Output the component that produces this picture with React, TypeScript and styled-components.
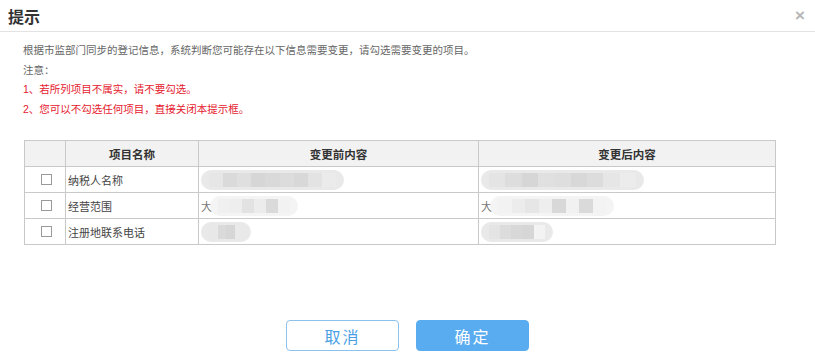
import styled, { createGlobalStyle } from "styled-components";

const GlobalStyle = createGlobalStyle`
  html, body {
    margin: 0;
    padding: 0;
    background: #fff;
  }
  body {
    font-family: "Liberation Sans", "Noto Sans CJK SC", sans-serif;
  }
`;

type Blob = { lead?: boolean; width: number; blocks: string[] };

const rows: { name: string; before: Blob; after: Blob }[] = [
  {
    name: "纳税人名称",
    before: { width: 143, blocks: ["#e6e6e6", "#dadada", "#dfdfdf", "#d6d6d6", "#d9d9d9", "#dcdcdc", "#d8d8d8", "#e3e3e3", "#ebebeb"] },
    after: { width: 163, blocks: ["#e4e4e4", "#dddddd", "#d6d6d6", "#e0e0e0", "#dedede", "#d8d8d8", "#dcdcdc", "#e6e6e6", "#ececec"] },
  },
  {
    name: "经营范围",
    before: { lead: true, width: 88, blocks: ["#f0f0f0", "#eeeeee", "#e2e2e2", "#ececec", "#dadada", "#f2f2f2"] },
    after: { lead: true, width: 124, blocks: ["#f2f2f2", "#ececec", "#e6e6e6", "#eeeeee", "#d8d8d8", "#f1f1f1", "#dadada", "#f3f3f3"] },
  },
  {
    name: "注册地联系电话",
    before: { width: 50, blocks: ["#e8e8e8", "#dadada", "#d6d6d6", "#e9e9e9"] },
    after: { width: 72, blocks: ["#e4e4e4", "#dcdcdc", "#d8d8d8", "#d6d6d6", "#f3f3f3"] },
  },
];

export default function App() {
  return (
    <>
      <GlobalStyle />
      <Dialog>
        <Header>
          <Title>提示</Title>
          <Close>×</Close>
        </Header>
        <Notes>
          <Line>根据市监部门同步的登记信息，系统判断您可能存在以下信息需要变更，请勾选需要变更的项目。</Line>
          <Line>注意：</Line>
          <Line warn>1、若所列项目不属实，请不要勾选。</Line>
          <Line warn>2、您可以不勾选任何项目，直接关闭本提示框。</Line>
        </Notes>
        <Table>
          <colgroup>
            <col style={{ width: 41 }} />
            <col style={{ width: 133 }} />
            <col style={{ width: 280 }} />
            <col />
          </colgroup>
          <thead>
            <tr>
              <Th />
              <Th>项目名称</Th>
              <Th>变更前内容</Th>
              <Th>变更后内容</Th>
            </tr>
          </thead>
          <tbody>
            {rows.map((r) => (
              <tr key={r.name}>
                <Td center>
                  <Check />
                </Td>
                <Td>{r.name}</Td>
                <Td>
                  <Masked blob={r.before} />
                </Td>
                <Td>
                  <Masked blob={r.after} />
                </Td>
              </tr>
            ))}
          </tbody>
        </Table>
        <Footer>
          <Button>取消</Button>
          <Button primary>确定</Button>
        </Footer>
      </Dialog>
    </>
  );
}

const Masked = ({ blob }: { blob: Blob }) => (
  <MaskRow>
    {blob.lead && <Lead>大</Lead>}
    <Pill style={{ width: blob.width }} faint={blob.lead}>
      {blob.blocks.map((c, i) => (
        <Block key={i} style={{ background: c }} />
      ))}
    </Pill>
  </MaskRow>
);

const Dialog = styled.div`
  width: 815px;
  height: 352px;
  display: flex;
  flex-direction: column;
  box-sizing: border-box;
`;

const Header = styled.div`
  height: 31px;
  display: flex;
  align-items: center;
  justify-content: space-between;
  padding: 0 10px 0 8px;
  border-bottom: 1px solid #e3e3e3;
`;

const Title = styled.div`
  font-size: 16px;
  font-weight: bold;
  color: #333;
`;

const Close = styled.div`
  font-size: 17px;
  font-weight: bold;
  color: #b5b5b5;
  line-height: 1;
`;

const Notes = styled.div`
  padding: 9px 0 0 23px;
`;

const Line = styled.div<{ warn?: boolean }>`
  font-size: 10.5px;
  line-height: 19.6px;
  color: ${({ warn }) => (warn ? "#e5202e" : "#666")};
`;

const Table = styled.table`
  margin: 21px 0 0 24px;
  width: 752px;
  border-collapse: collapse;
  table-layout: fixed;
  font-size: 11px;
  color: #444;
`;

const Th = styled.th`
  height: 25px;
  padding: 0;
  background: #f2f2f2;
  border: 1px solid #c9c9c9;
  font-weight: bold;
  font-size: 11.5px;
  color: #333;
  text-align: center;
`;

const Td = styled.td<{ center?: boolean }>`
  height: 25px;
  padding: 0 0 0 2px;
  border: 1px solid #c9c9c9;
  text-align: ${({ center }) => (center ? "center" : "left")};
`;

const Check = styled.span`
  display: inline-block;
  width: 9px;
  height: 9px;
  border: 1px solid #9a9a9a;
  vertical-align: middle;
  margin-top: -3px;
`;

const MaskRow = styled.div`
  display: flex;
  align-items: center;
`;

const Lead = styled.span`
  font-size: 11px;
  color: #777;
  margin-right: -2px;
`;

const Pill = styled.div<{ faint?: boolean }>`
  box-sizing: border-box;
  height: 20px;
  display: flex;
  padding: 0 8px;
  border-radius: 10px;
  background: ${({ faint }) => (faint ? "#f4f4f4" : "#e9e9e9")};
  overflow: hidden;
  filter: blur(0.6px);
`;

const Block = styled.div`
  flex: 1;
  margin: 3px 0;
`;

const Footer = styled.div`
  margin-top: auto;
  padding-bottom: 1px;
  display: flex;
  justify-content: center;
  gap: 17px;
`;

const Button = styled.button<{ primary?: boolean }>`
  width: 113px;
  height: 31px;
  border-radius: 4px;
  font-family: "Liberation Sans", "Noto Sans CJK SC", sans-serif;
  font-size: 16px;
  letter-spacing: 2px;
  border: 1px solid ${({ primary }) => (primary ? "#5aacf0" : "#8cc1ec")};
  background: ${({ primary }) => (primary ? "#5aacf0" : "#fff")};
  color: ${({ primary }) => (primary ? "#fff" : "#4a9fe4")};
`;
